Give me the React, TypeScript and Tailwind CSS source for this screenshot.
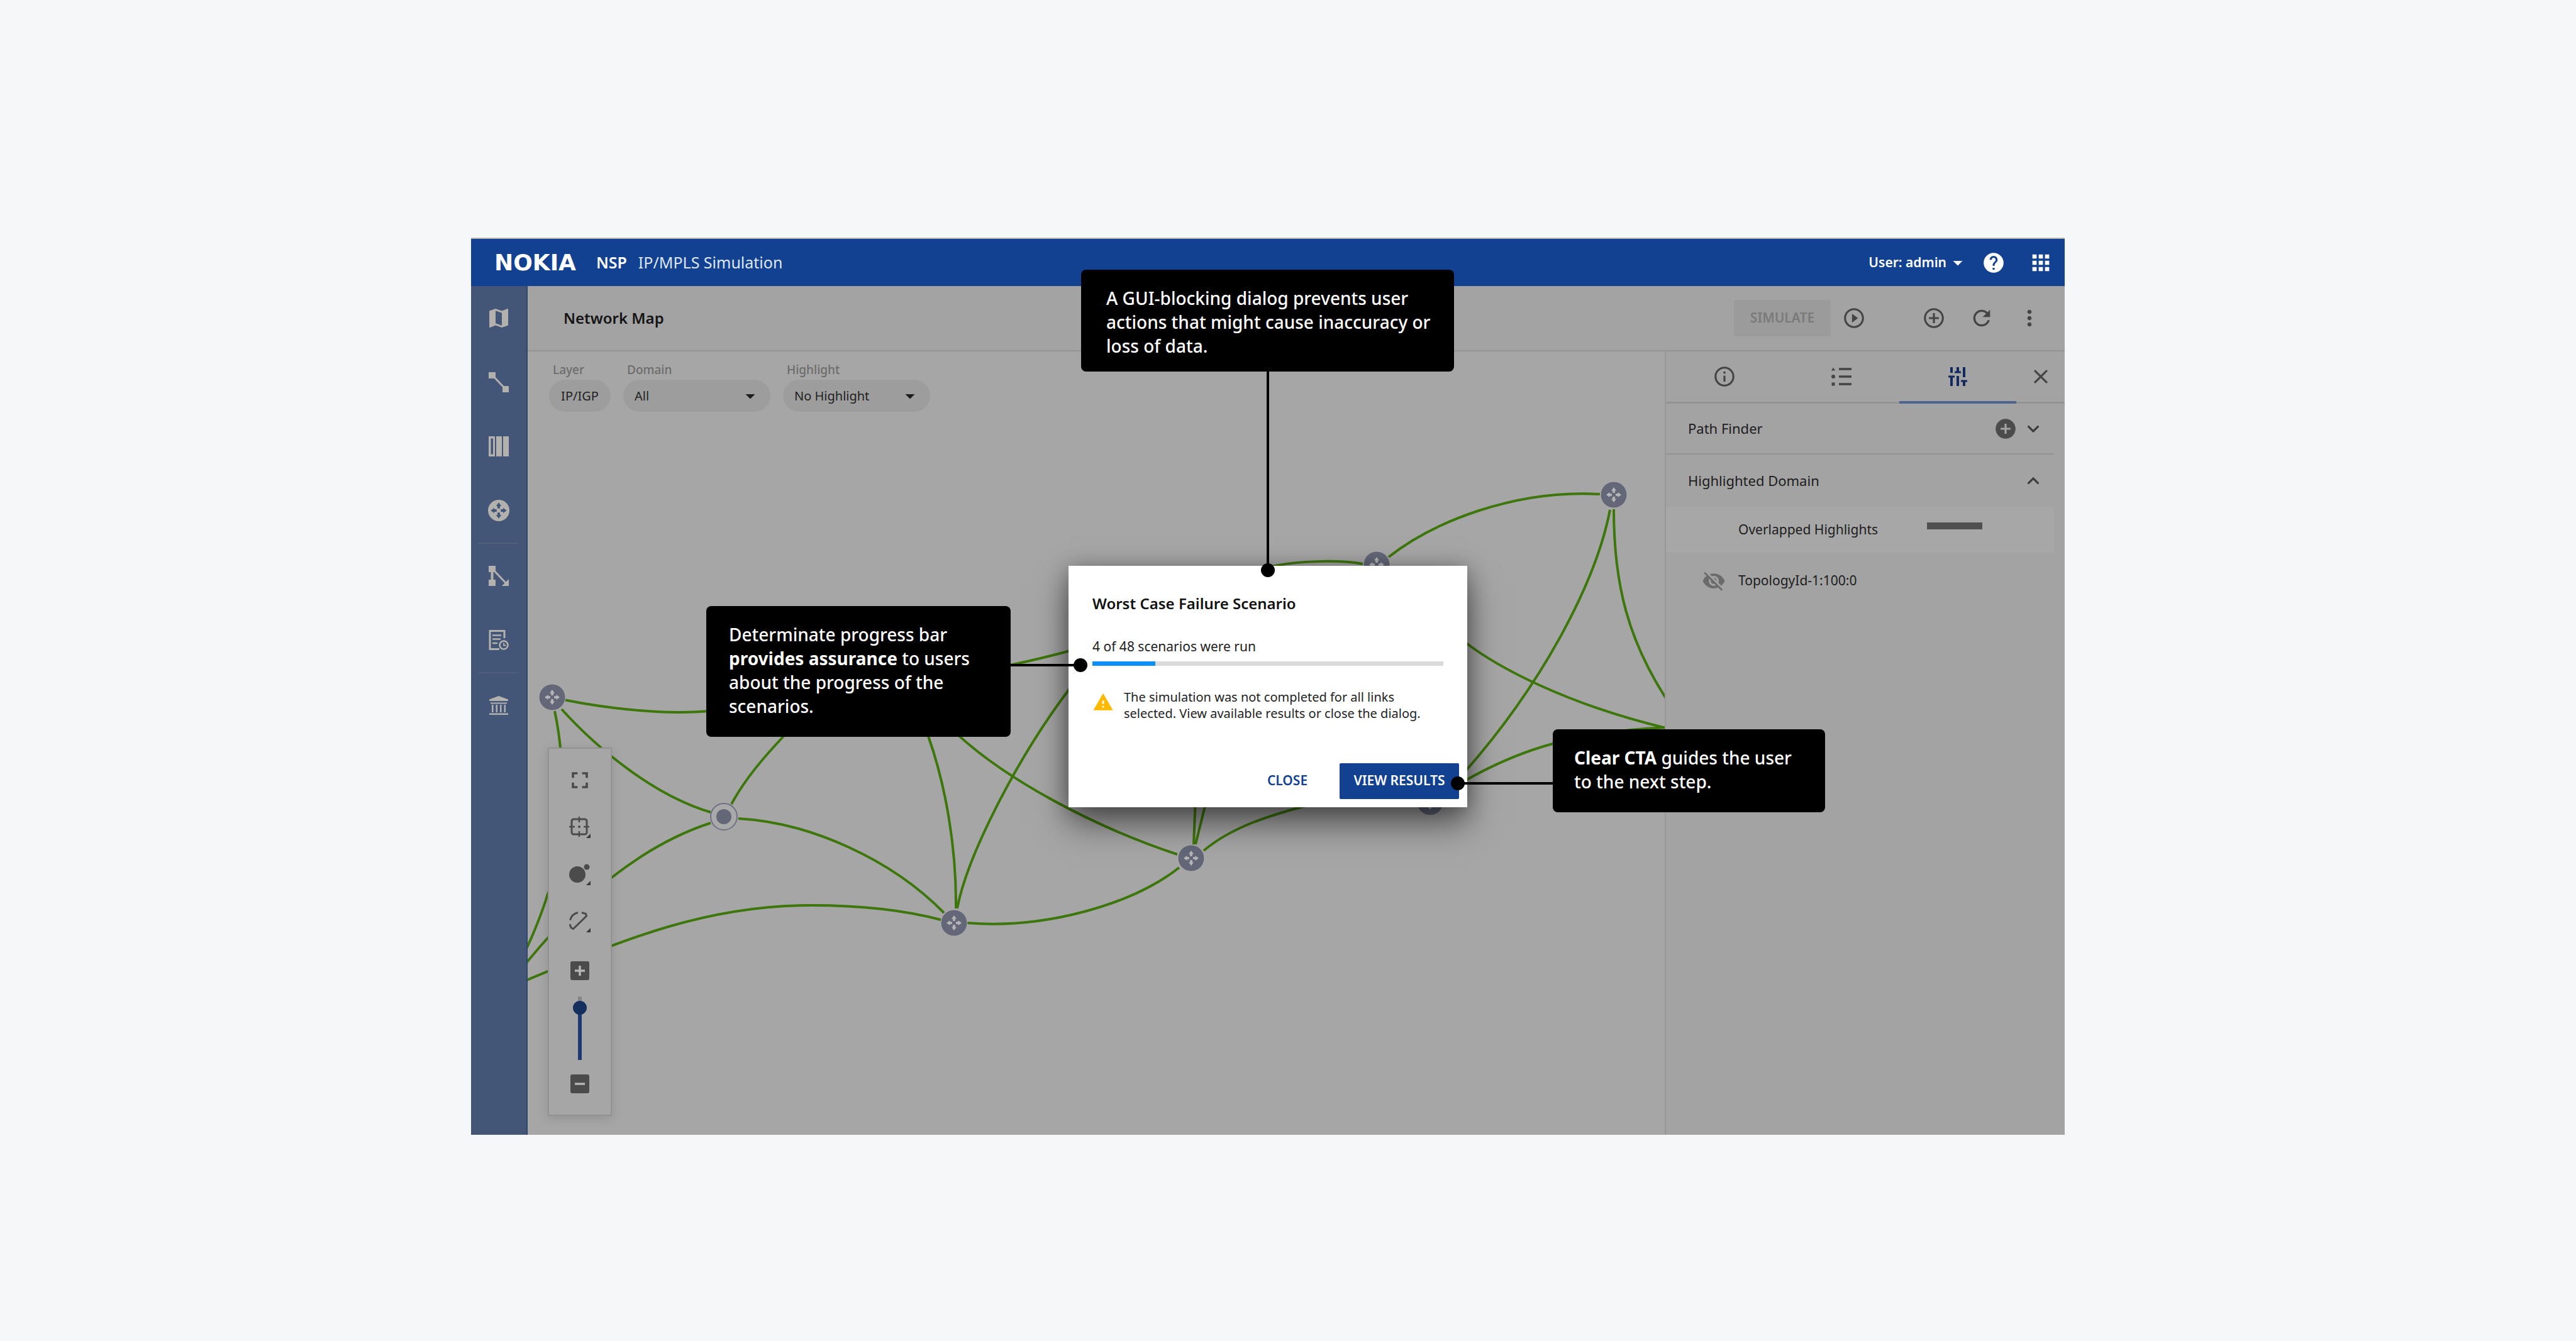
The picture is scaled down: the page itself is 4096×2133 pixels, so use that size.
import type { ReactNode } from "react";
import {
  MdAddCircle,
  MdAddCircleOutline,
  MdApps,
  MdArrowDropDown,
  MdClose,
  MdExpandLess,
  MdExpandMore,
  MdFullscreen,
  MdHelp,
  MdInfoOutline,
  MdMap,
  MdMoreVert,
  MdPlayCircleOutline,
  MdRefresh,
  MdVisibilityOff,
  MdWarning,
} from "react-icons/md";

const ROUTER_ANGLES = [0, 90, 180, 270];

function RouterArrows({ fill }: { fill: string }) {
  return (
    <>
      {ROUTER_ANGLES.map((a) => (
        <path key={a} d="M0 -12 L4 -6.5 L1.8 -6.5 L1.8 -3 L-1.8 -3 L-1.8 -6.5 L-4 -6.5 Z" fill={fill} transform={`rotate(${a})`} />
      ))}
    </>
  );
}

/* ---------- left navigation ---------- */

const LinkIcon = () => (
  <svg viewBox="0 0 32 32" className="h-8 w-8" fill="currentColor">
    <rect x="0" y="0" width="11" height="10" />
    <rect x="22" y="22" width="10" height="10" />
    <path d="M7 6 L27 27" stroke="currentColor" strokeWidth="3" />
  </svg>
);

const ColumnsIcon = () => (
  <svg viewBox="0 0 32 32" className="h-8 w-8" fill="currentColor">
    <path fillRule="evenodd" d="M0 0h10v32H0z M3.5 3.5v25h3.5v-25z" />
    <rect x="12" y="0" width="9" height="32" />
    <rect x="23" y="0" width="9" height="32" />
  </svg>
);

const RouterIcon = () => (
  <svg viewBox="-16 -16 32 32" className="h-[34px] w-[34px]">
    <circle r="16" fill="currentColor" />
    <RouterArrows fill="#3f5679" />
  </svg>
);

const TopologyIcon = () => (
  <svg viewBox="0 0 32 32" className="h-8 w-8" fill="currentColor">
    <rect x="0" y="0" width="11" height="10" />
    <rect x="0" y="22" width="11" height="10" />
    <path d="M5.5 8v16" stroke="currentColor" strokeWidth="4" />
    <path d="M8 7 L27 27" stroke="currentColor" strokeWidth="3" />
    <path d="M21 32 L32 21 V32 Z" />
  </svg>
);

const ReportIcon = () => (
  <svg viewBox="0 0 32 32" className="h-8 w-8" fill="none" stroke="currentColor" strokeWidth="3">
    <path d="M25 13V1.5H2V30.500h15" />
    <path d="M6 8.500h14M6 14.500h13M6 21h8" strokeWidth="2.500" />
    <circle cx="24" cy="24" r="6.500" strokeWidth="2.500" />
    <path d="M24 20.500V24.500h3.500" strokeWidth="1.800" />
  </svg>
);

const BankIcon = () => (
  <svg viewBox="0 0 32 32" className="h-8 w-8" fill="currentColor">
    <path d="M16 1 L31 6.500V9H1V6.500Z" />
    <rect x="3" y="11.500" width="26" height="2" />
    <rect x="5" y="15" width="2.500" height="12" />
    <rect x="11.500" y="15" width="2.500" height="12" />
    <rect x="18" y="15" width="2.500" height="12" />
    <rect x="24.500" y="15" width="2.500" height="12" />
    <rect x="1" y="28.500" width="30" height="2.500" />
  </svg>
);

function NavItem({ label, children }: { label: string; children: ReactNode }) {
  return (
    <a href="#" aria-label={label} className="flex h-[102px] w-full items-center justify-center">
      {children}
    </a>
  );
}

function Sidebar() {
  return (
    <nav className="flex w-[90px] shrink-0 flex-col items-center border-r-2 border-[#2f4672] bg-[#435677] text-[#b3b1ae]">
      <NavItem label="Map"><MdMap className="h-10 w-10" /></NavItem>
      <NavItem label="Links"><LinkIcon /></NavItem>
      <NavItem label="Inventory"><ColumnsIcon /></NavItem>
      <NavItem label="Routers"><RouterIcon /></NavItem>
      <div className="h-0.5 w-16 bg-[#525f78]" />
      <NavItem label="Topology"><TopologyIcon /></NavItem>
      <NavItem label="Reports"><ReportIcon /></NavItem>
      <div className="h-0.5 w-16 bg-[#525f78]" />
      <NavItem label="Archive"><BankIcon /></NavItem>
    </nav>
  );
}

/* ---------- top bars ---------- */

function Header() {
  return (
    <header className="flex h-[77px] items-center border-t-2 border-[#bab6ba] bg-[#124191] pl-[37px] pr-[18px] text-white">
      <div className="font-['DejaVu_Sans'] text-[36px] leading-none font-bold">NOKIA</div>
      <div className="ml-8 text-[25px] font-semibold">NSP</div>
      <div className="ml-[18px] text-[25px] text-[#dfe6f2]">IP/MPLS Simulation</div>
      <button type="button" className="ml-auto flex items-center text-[21px] font-semibold">
        User: admin
        <MdArrowDropDown className="h-9 w-9" />
      </button>
      <button type="button" aria-label="Help" className="ml-5"><MdHelp className="h-[38px] w-[38px]" /></button>
      <button type="button" aria-label="Applications" className="ml-9"><MdApps className="h-10 w-10" /></button>
    </header>
  );
}

function Toolbar() {
  return (
    <div className="flex h-[104px] items-center border-b-2 border-[#949494] bg-[#a3a3a3] pr-9 pl-[57px] text-[#444]">
      <h1 className="text-[24px] font-semibold text-[#141414]">Network Map</h1>
      <button type="button" className="ml-auto h-[58px] w-[154px] rounded bg-[#9b9b9b] text-[21px] font-semibold text-[#7a7a7a]">
        SIMULATE
      </button>
      <button type="button" aria-label="Run" className="ml-[18px]"><MdPlayCircleOutline className="h-[38px] w-[38px]" /></button>
      <button type="button" aria-label="Add" className="ml-[89px]"><MdAddCircleOutline className="h-[38px] w-[38px]" /></button>
      <button type="button" aria-label="Refresh" className="ml-[37px]"><MdRefresh className="h-10 w-10" /></button>
      <button type="button" aria-label="More" className="ml-9"><MdMoreVert className="h-10 w-10" /></button>
    </div>
  );
}

/* ---------- network map ---------- */

const EDGES = [
  "M39 549 C100 563 180 573 240 573 S420 560 520 510",
  "M324 719 C345 680 375 645 407 611 S470 560 500 545",
  "M54 568 C110 630 200 705 291 732",
  "M43 571 C62 660 60 800 32 862 C25 885 10 925 -4 953",
  "M291 749 C180 785 80 870 -4 974",
  "M-4 1000 C150 936 280 880 450 880 C530 880 600 888 657 903",
  "M335 742 C450 748 580 808 662 892",
  "M630 590 L637 611 C665 690 682 790 681 885",
  "M665 590 L680 605 C760 680 900 755 1033 799",
  "M683 885 C698 805 775 650 862 535",
  "M700 512 C760 500 820 487 866 474",
  "M699 908 C820 918 960 880 1036 820",
  "M1059 783 L1062 710",
  "M1062 783 L1079 714",
  "M1075 793 C1120 755 1180 737 1240 721",
  "M1721 251 C1700 360 1620 520 1490 668",
  "M1490 682 C1560 642 1650 603 1814 597",
  "M1727 250 C1727 370 1750 460 1814 557",
  "M1490 461 C1540 500 1650 560 1814 599",
  "M1369 326 C1440 270 1570 218 1705 226",
  "M1180 342 C1220 332 1290 330 1328 337",
];

const ROUTERS: [number, number][] = [
  [39, 549],
  [678, 908],
  [1055, 805],
  [1350, 338],
  [1727, 227],
  [1435, 716],
];

function NetworkCanvas() {
  return (
    <svg viewBox="0 -1 1808 1246" preserveAspectRatio="xMinYMin slice" className="absolute inset-0 h-full w-full">
      <g fill="none" stroke="#3d760b" strokeWidth="4">
        {EDGES.map((d) => (
          <path key={d} d={d} />
        ))}
      </g>
      {ROUTERS.map(([x, y]) => (
        <g key={x} transform={`translate(${x} ${y})`}>
          <circle r="21" fill="#636778" stroke="#adadad" strokeWidth="1" />
          <RouterArrows fill="#b7b7b7" />
        </g>
      ))}
      <g transform="translate(312 739)">
        <circle r="21" fill="#a9a9a9" stroke="#6d7183" strokeWidth="2" />
        <circle r="12" fill="#636778" />
      </g>
    </svg>
  );
}

function FilterSelect({ label, value }: { label: string; value: string }) {
  return (
    <label className="flex flex-col">
      <span className="mb-[3px] pl-1.5 text-[19px] leading-[26px] font-medium text-[#6c6c6c]">{label}</span>
      <span className="relative">
        <select className="h-[51px] w-[234px] appearance-none rounded-full bg-[#9d9d9d] pl-[18px] text-[20px] text-[#222]">
          <option>{value}</option>
        </select>
        <MdArrowDropDown className="pointer-events-none absolute top-2 right-3.5 h-9 w-9 text-[#1d1d1d]" />
      </span>
    </label>
  );
}

function Filters() {
  return (
    <div className="relative flex gap-5 pt-4 pl-[34px]">
      <div className="flex flex-col">
        <span className="mb-[3px] pl-1.5 text-[19px] leading-[26px] font-medium text-[#6c6c6c]">Layer</span>
        <button type="button" className="h-[51px] w-[98px] rounded-full bg-[#9d9d9d] text-[20px] text-[#222]">IP/IGP</button>
      </div>
      <FilterSelect label="Domain" value="All" />
      <FilterSelect label="Highlight" value="No Highlight" />
    </div>
  );
}

const Corner = () => <path d="M37 30v7h-7z" fill="#3a3a3a" stroke="none" />;

function ToolButton({ label, children }: { label: string; children: ReactNode }) {
  return (
    <button type="button" aria-label={label} className="flex h-[75px] w-full items-center justify-center">
      {children}
    </button>
  );
}

function MapTools() {
  return (
    <div className="absolute bottom-[30px] left-8 flex w-[102px] flex-col items-center border-2 border-[#929292] bg-[#a6a6a6] py-3 text-[#4b4b4b] shadow-[0_4px_16px_rgba(0,0,0,0.12)]">
      <ToolButton label="Fit to screen"><MdFullscreen className="h-11 w-11" /></ToolButton>
      <ToolButton label="Center view">
        <svg viewBox="0 0 40 40" className="h-10 w-10" fill="none" stroke="currentColor">
          <rect x="7" y="7" width="24" height="24" rx="3" strokeWidth="3" />
          <path d="M19 3v9M19 26v9M3 19h9M26 19h9" strokeWidth="2.500" />
          <circle cx="19" cy="19" r="2" fill="currentColor" stroke="none" />
          <Corner />
        </svg>
      </ToolButton>
      <ToolButton label="Node size">
        <svg viewBox="0 0 40 40" className="h-10 w-10" fill="currentColor">
          <circle cx="16" cy="20" r="13" />
          <circle cx="31" cy="8" r="4.500" />
          <Corner />
        </svg>
      </ToolButton>
      <ToolButton label="Link shape">
        <svg viewBox="0 0 40 40" className="h-10 w-10" fill="none" stroke="currentColor" strokeWidth="3">
          <path d="M4.500 17.500A17 17 0 0 1 17 5.500M23 5.500L29.500 7.500L30.500 11L9.500 31.500L6 29.500L4 24" />
          <Corner />
        </svg>
      </ToolButton>
      <button type="button" aria-label="Zoom in" className="flex h-[82px] w-full items-center justify-center">
        <svg viewBox="0 0 30 30" className="h-[30px] w-[30px]">
          <rect width="30" height="30" rx="3" fill="currentColor" />
          <path d="M15 7v16M7 15h16" stroke="#b5b5b5" strokeWidth="3.500" />
        </svg>
      </button>
      <input
        type="range"
        aria-label="Zoom level"
        defaultValue={91}
        className="h-[101px] w-[22px] appearance-none bg-[linear-gradient(to_bottom,#868686_18px,#1d3a72_18px)] bg-[size:6px_100%] bg-center bg-no-repeat [direction:rtl] [writing-mode:vertical-lr] [&::-webkit-slider-thumb]:h-[22px] [&::-webkit-slider-thumb]:w-[22px] [&::-webkit-slider-thumb]:appearance-none [&::-webkit-slider-thumb]:rounded-full [&::-webkit-slider-thumb]:bg-[#15305f]"
      />
      <ToolButton label="Zoom out">
        <svg viewBox="0 0 30 30" className="h-[30px] w-[30px]">
          <rect width="30" height="30" rx="3" fill="currentColor" />
          <path d="M7 15h16" stroke="#b5b5b5" strokeWidth="3.500" />
        </svg>
      </ToolButton>
    </div>
  );
}

/* ---------- side panel ---------- */

const ListIcon = () => (
  <svg viewBox="0 0 32 30" className="h-[30px] w-8" fill="currentColor">
    <path d="M3 0.500L6 5.500H0Z" />
    <circle cx="3" cy="15" r="3" />
    <rect x="0.500" y="24.500" width="5" height="5" />
    <path d="M12 3h20M12 15h20M12 27h20" stroke="currentColor" strokeWidth="3.500" />
  </svg>
);

const SlidersIcon = () => (
  <svg viewBox="0 0 30 30" className="h-[30px] w-[30px]" fill="none" stroke="currentColor" strokeWidth="4">
    <path d="M5 0v9M5 15v15M15 0v8M15 14v16M25 0v16M25 22v8" />
    <path d="M0 15h10M10 8h10M20 22h10" strokeWidth="3" />
  </svg>
);

function Panel() {
  return (
    <aside className="w-[636px] shrink-0 border-l-2 border-[#979797] bg-[#a3a3a3] text-[21px] text-[#1d1d1d]">
      <div className="flex h-[83px] text-[#444]">
        <button type="button" aria-label="Information" className="flex flex-1 items-center justify-center border-b-[3px] border-[#949494]">
          <MdInfoOutline className="h-[38px] w-[38px]" />
        </button>
        <button type="button" aria-label="List" className="flex flex-1 items-center justify-center border-b-[3px] border-[#949494]">
          <ListIcon />
        </button>
        <button type="button" aria-label="Settings" className="flex flex-1 items-center justify-center border-b-4 border-[#4d628c] text-[#11295f]">
          <SlidersIcon />
        </button>
        <button type="button" aria-label="Close panel" className="flex w-[77px] items-center justify-center border-b-[3px] border-[#949494]">
          <MdClose className="h-[38px] w-[38px]" />
        </button>
      </div>
      <div className="mr-[17px] flex h-[81px] items-center border-b-2 border-[#949494] pr-3.5 pl-[35px]">
        <h2 className="mr-auto text-[22px]">Path Finder</h2>
        <button type="button" aria-label="Add path"><MdAddCircle className="h-[38px] w-[38px] text-[#4b4b4b]" /></button>
        <button type="button" aria-label="Expand" className="ml-1.5"><MdExpandMore className="h-[38px] w-[38px] text-[#3c3c3c]" /></button>
      </div>
      <div className="mr-[17px] flex h-[83px] items-center pr-3.5 pl-[35px]">
        <h2 className="mr-auto text-[22px]">Highlighted Domain</h2>
        <button type="button" aria-label="Collapse"><MdExpandLess className="h-[38px] w-[38px] text-[#3c3c3c]" /></button>
      </div>
      <div className="mr-[17px] flex h-[73px] items-center bg-[#a7a7a7] pl-[115px]">
        <span className="w-[300px]">Overlapped Highlights</span>
        <span className="mb-[13px] h-[11px] w-[88px] bg-[#505050]" />
      </div>
      <div className="mr-[17px] flex h-[90px] items-center pl-[57px]">
        <MdVisibilityOff className="mr-5 h-[38px] w-[38px] text-[#6b6b6b]" />
        TopologyId-1:100:0
      </div>
    </aside>
  );
}

/* ---------- dialog and its annotations ---------- */

function Note({ className, children }: { className: string; children: ReactNode }) {
  return (
    <div className={`absolute rounded-lg bg-black pt-[26px] text-[28px] leading-[38px] font-medium text-white ${className}`}>
      {children}
    </div>
  );
}

const Dot = ({ className }: { className: string }) => (
  <span className={`absolute h-[22px] w-[22px] rounded-full bg-black ${className}`} />
);

function Annotations() {
  return (
    <>
      <Note className="bottom-[693px] left-5 w-[593px] pb-[22px] pl-10">
        A GUI-blocking dialog prevents user
        <br />
        actions that might cause inaccuracy or
        <br />
        loss of data.
      </Note>
      <span className="absolute bottom-[378px] left-[315px] h-[316px] w-1 bg-black" />
      <Dot className="-top-1 left-[306px]" />

      <Note className="top-[64px] right-[726px] w-[484px] pb-[30px] pl-9">
        Determinate progress bar
        <br />
        <strong className="font-bold">provides assurance</strong> to users
        <br />
        about the progress of the
        <br />
        scenarios.
      </Note>
      <span className="absolute top-[156px] right-[614px] h-1 w-[113px] bg-black" />
      <Dot className="top-[147px] left-2" />

      <Note className="top-[260px] left-[770px] w-[433px] pb-[30px] pl-[34px]">
        <strong className="font-bold">Clear CTA</strong> guides the user
        <br />
        to the next step.
      </Note>
      <span className="absolute top-[344px] left-[618px] h-1 w-[153px] bg-black" />
      <Dot className="top-[335px] left-[608px]" />
    </>
  );
}

function FailureDialog() {
  const done = 4;
  const shown = 18;
  return (
    <div className="absolute inset-0 flex items-center justify-center">
      <div className="relative">
        <section
          role="dialog"
          aria-label="Worst Case Failure Scenario"
          className="flex h-[384px] w-[634px] flex-col bg-white px-[38px] pt-11 text-[#222] shadow-[0_26px_50px_rgba(0,0,0,0.5),0_2px_30px_rgba(0,0,0,0.25)]"
        >
          <h2 className="text-[24px] leading-8 font-semibold text-[#111]">Worst Case Failure Scenario</h2>
          <p className="mt-[38px] text-[21px] leading-7">{done} of 48 scenarios were run</p>
          <div role="progressbar" aria-valuenow={done} aria-valuemax={48} className="mt-2.5 h-[7px] bg-[#dadada]">
            <div className="h-full bg-[#0b8ff9]" style={{ width: `${shown}%` }} />
          </div>
          <div className="mt-[37px] flex gap-4 whitespace-nowrap">
            <MdWarning className="mt-1 h-[34px] w-[34px] shrink-0 text-[#ffb900]" />
            <p className="text-[20px] leading-[26px]">
              The simulation was not completed for all links
              <br />
              selected. View available results or close the dialog.
            </p>
          </div>
          <div className="mt-auto -mr-[25px] mb-[13px] flex justify-end gap-[27px] text-[21px] font-semibold">
            <button type="button" className="h-[57px] w-28 text-[#124191]">CLOSE</button>
            <button type="button" className="h-[57px] w-[190px] rounded-xs bg-[#124191] text-white">VIEW RESULTS</button>
          </div>
        </section>
        <Annotations />
      </div>
    </div>
  );
}

export default function App() {
  return (
    <div className="flex min-h-screen bg-[#f5f7f9] pt-[378px] pr-[813px] pb-[328px] pl-[749px] font-['Noto_Sans',sans-serif]">
      <div className="relative flex flex-1 flex-col">
        <Header />
        <div className="flex flex-1">
          <Sidebar />
          <div className="flex flex-1 flex-col">
            <Toolbar />
            <div className="flex flex-1">
              <main className="relative flex-1 overflow-hidden bg-[#a6a6a6]">
                <NetworkCanvas />
                <Filters />
                <MapTools />
              </main>
              <Panel />
            </div>
          </div>
        </div>
        <FailureDialog />
      </div>
    </div>
  );
}
